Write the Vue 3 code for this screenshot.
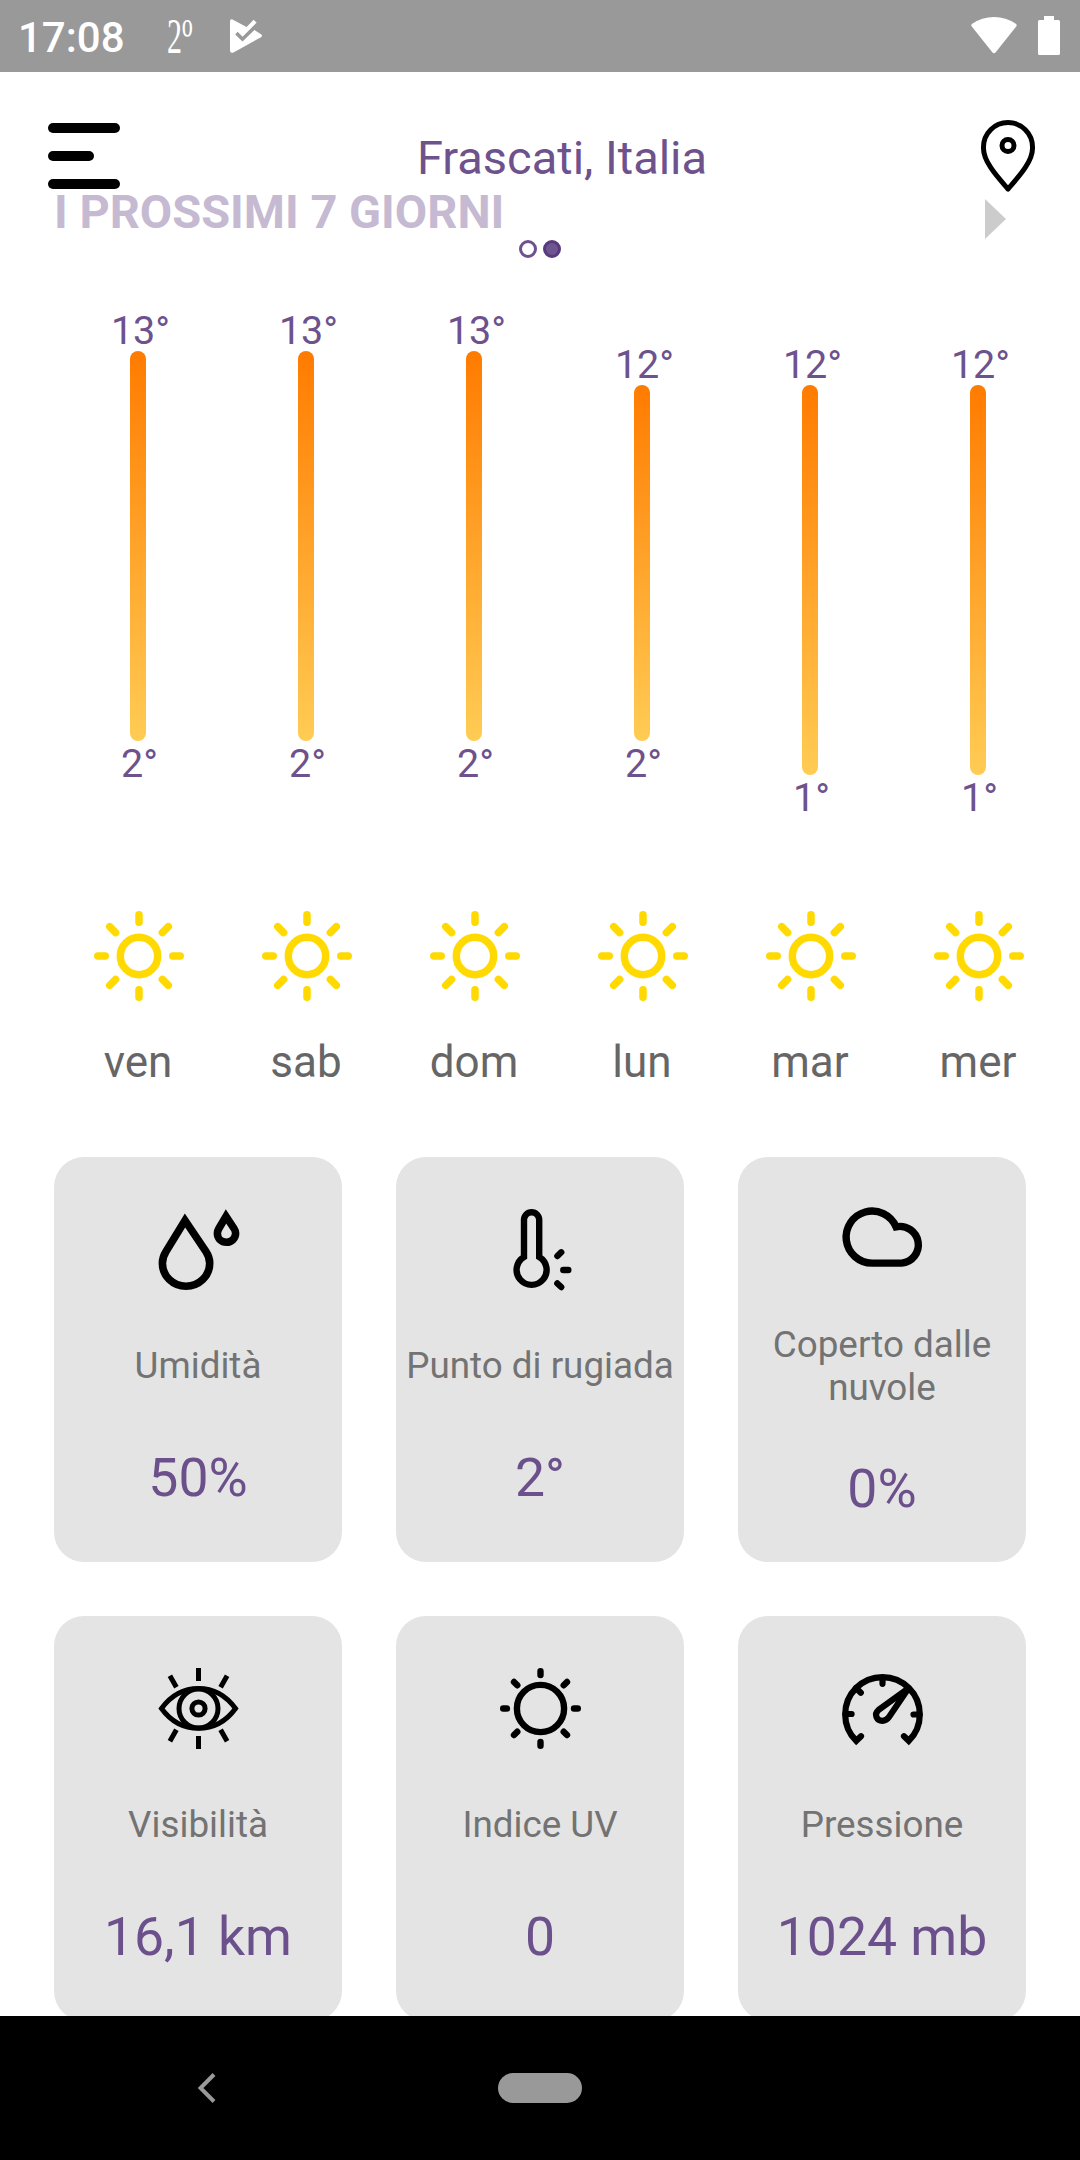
<template>
  <div class="screen">
    <div class="status-bar">
      <span class="clock">17:08</span>
      <span class="temp-badge"><span class="temp-badge-text">2<span class="ordinal">º</span></span></span>
      <svg class="store-icon" viewBox="0 0 32 34">
        <path d="M2 .3 16.6 8 23.6 .8 26.6 3.6 12.6 17.7 7.6 12.7 5.2 15.4 12.5 22.4 24.4 10.9 31 15.2Q33 16.6 31 18.2L3 33.7Q0 34.4 0 31.6V2.2Q0 0 2 .3Z" fill="#fff" />
      </svg>
      <svg class="wifi-icon" viewBox="0 0 46 37">
        <path d="M.8 9.6Q-.4 8 1.2 6.8Q11 0 23 0T44.800 6.800Q46.400 8 45.200 9.600L24.500 35.500Q23 37 21.500 35.500Z" fill="#fff" />
      </svg>
      <svg class="battery-icon" viewBox="0 0 22 39">
        <path d="M6 0H16V4H20.500Q22 4 22 5.500V37.500Q22 39 20.500 39H1.500Q0 39 0 37.500V5.500Q0 4 1.500 4H6Z" fill="#fff" />
      </svg>
    </div>

    <div class="content">
      <header class="header">
        <div class="menu">
          <span class="menu-line"></span>
          <span class="menu-line short"></span>
          <span class="menu-line"></span>
        </div>
        <h1 class="city">Frascati, Italia</h1>
        <svg class="pin" viewBox="0 0 54 72">
          <path d="M27 69C18 58.500 2.500 42.500 2.500 28.500V27A24.500 24.500 0 0 1 51.500 27V28.500C51.500 42.500 36 58.500 27 69Z" />
          <circle cx="27" cy="25.600" r="6" />
        </svg>
      </header>

      <div class="section-row">
        <h2 class="section-title">I PROSSIMI 7 GIORNI</h2>
        <span class="next-arrow"></span>
      </div>
      <div class="pager">
        <span class="dot"></span>
        <span class="dot active"></span>
      </div>

      <div class="forecast">
        <div v-for="day in days" :key="day.name" class="day">
          <div class="plot" :style="{ paddingTop: (maxTemp - day.high) * degree + 'px' }">
            <span class="temp">{{ day.high }}°</span>
            <span class="bar" :style="{ height: (day.high - day.low) * degree + 16 + 'px' }"></span>
            <span class="temp low">{{ day.low }}°</span>
          </div>
          <svg class="sun" viewBox="-45 -45 90 90">
            <circle r="18.700" />
            <path v-for="a in 4" :key="a" :transform="`rotate(${a * 90})`" d="M0-41.200V-33.800M23.400-23.400 29.300-29.300" />
          </svg>
          <span class="day-name">{{ day.name }}</span>
        </div>
      </div>

      <div class="cards">
        <div v-for="card in cards" :key="card.label" class="card">
          <svg class="card-icon" viewBox="0 0 81 81" :stroke-width="card.stroke" :class="{ round: card.round }">
            <path v-for="d in card.paths" :key="d" :d="d" />
          </svg>
          <span class="label">{{ card.label }}</span>
          <span class="value">{{ card.value }}</span>
        </div>
      </div>
    </div>

    <div class="nav-bar">
      <svg class="back" viewBox="0 0 18 30">
        <path d="M16 1.500 2.500 15 16 28.500" />
      </svg>
      <span class="home"></span>
    </div>
  </div>
</template>

<script setup>
const maxTemp = 13
// height of one degree in the chart, in px
const degree = 34

const days = [
  { name: 'ven', high: 13, low: 2 },
  { name: 'sab', high: 13, low: 2 },
  { name: 'dom', high: 13, low: 2 },
  { name: 'lun', high: 12, low: 2 },
  { name: 'mar', high: 12, low: 1 },
  { name: 'mer', high: 12, low: 1 },
]

const cards = [
  {
    label: 'Umidità',
    value: '50%',
    stroke: 7.6,
    paths: [
      'M27 11.500 8 42.500C5.800 46 4.400 50 4.400 54.200C4.400 67 15 77.200 28 77.200S51.700 67 51.700 54.200C51.700 50 50.500 46.500 48 42.700Z',
      'M68 7.500 61 19.300C60 21 59.400 22.500 59.400 24.200C59.400 29.500 63.500 33.200 68.500 33.200S77.600 29.400 77.600 24.200C77.600 22.500 77 21 76 19.500Z',
    ],
  },
  {
    label: 'Punto di rugiada',
    value: '2°',
    stroke: 6.4,
    round: true,
    paths: [
      'M24 47.900V10.800A7.600 7.600 0 0 1 39.200 10.800V47.900A15 15 0 1 1 24 47.900Z',
      'M57.400 47 61.200 43.300M63.300 61H68.300M57.400 74.500 61.200 78',
    ],
  },
  {
    label: 'Coperto dalle nuvole',
    value: '0%',
    stroke: 7.4,
    paths: ['M30 65.100A26 26 0 1 1 54 28.800A18.400 18.400 0 1 1 59.600 65.100Z'],
  },
  {
    label: 'Visibilità',
    value: '16,1 km',
    stroke: 5,
    paths: [
      'M3.500 40.500C13 27.500 26 20.500 40.500 20.500S68 27.500 77.500 40.500C68 53.500 55 60.300 40.500 60.300S13 53.500 3.500 40.500Z',
      'M21 40.500A19.500 19.500 0 1 1 60 40.500A19.500 19.500 0 1 1 21 40.500Z',
      'M33.900 40.500A6.600 6.600 0 1 1 47.100 40.500A6.600 6.600 0 1 1 33.900 40.500Z',
      'M40.500 0V13M40.500 68V81M11.900 7.700 18.400 19.300M69.100 7.700 62.600 19.300M11.900 73.300 18.400 61.700M69.100 73.300 62.600 61.700',
    ],
  },
  {
    label: 'Indice UV',
    value: '0',
    stroke: 6.4,
    round: true,
    paths: [
      'M16.900 40.500A23.600 23.600 0 1 1 64.100 40.500A23.600 23.600 0 1 1 16.900 40.500Z',
      'M40.500 3.200V7M40.500 74V77.800M3.200 40.500H7M74 40.500H77.800M14 14 17.300 17.300M67 14 63.700 17.300M14 67 17.300 63.700M67 67 63.700 63.700',
    ],
  },
  {
    label: 'Pressione',
    value: '1024 mb',
    stroke: 6.2,
    round: true,
    paths: [
      'M19 68.200 14.200 72.800A37.300 37.300 0 1 1 66.800 72.800L62 68.200',
      'M40.500 10V15.800M3.500 46H9.600M77.500 46.500H71.500M14 20 18.800 24.800',
      'M66.500 20.300 36.500 42C31.500 46.500 34.800 52.800 40.300 52.800C43.500 52.800 45.500 51.200 47 49Z',
    ],
  },
]
</script>

<style>
body {
  background: #fff;
}
</style>

<style scoped>
.screen {
  display: flex;
  flex-direction: column;
  width: 1080px;
  height: 2160px;
  overflow: hidden;
  background: #fff;
  font-family: Roboto, "Liberation Sans", sans-serif;
}

.status-bar {
  display: flex;
  flex: none;
  align-items: flex-start;
  box-sizing: border-box;
  height: 72px;
  padding: 0 20px 0 18px;
  background: #999;
  color: #fff;
}
.clock {
  width: 149px;
  padding-top: 13px;
  font-size: 42px;
  font-weight: 500;
  line-height: 50px;
}
.temp-badge {
  width: 63px;
  padding-top: 8px;
}
.temp-badge-text {
  display: inline-block;
  font-family: "Liberation Serif", serif;
  font-size: 50px;
  line-height: 56px;
  transform: scaleX(0.6);
  transform-origin: left;
}
.ordinal {
  font-size: 57px;
  line-height: 0;
  vertical-align: -5px;
}
.store-icon {
  width: 32px;
  height: 34px;
  margin-top: 19px;
}
.wifi-icon {
  width: 46px;
  height: 37px;
  margin: 17px 21px 0 auto;
}
.battery-icon {
  width: 22px;
  height: 39px;
  margin-top: 16px;
}

.content {
  flex: 1;
  min-height: 0;
  overflow: hidden;
}

.header {
  display: flex;
  align-items: center;
  justify-content: space-between;
  height: 72px;
  padding: 48px 45px 0 48px;
}
.menu {
  display: flex;
  flex-direction: column;
  gap: 18px;
  width: 72px;
}
.menu-line {
  height: 10px;
  border-radius: 5px;
  background: #000;
}
.menu-line.short {
  width: 46px;
}
.city {
  margin: 4px 0 0 23px;
  color: #6d528d;
  font-size: 47px;
  font-weight: 400;
  line-height: 56px;
}
.pin {
  width: 54px;
  height: 72px;
  fill: none;
  stroke: #000;
  stroke-width: 5;
  stroke-linejoin: round;
}

.section-row {
  display: flex;
  align-items: flex-end;
  justify-content: space-between;
  height: 54px;
  margin-top: -7px;
  padding: 0 74px 0 54px;
}
.section-title {
  margin: 0;
  color: #c5bad2;
  font-size: 47px;
  font-weight: 700;
  line-height: 54px;
}
.next-arrow {
  border-top: 20.5px solid transparent;
  border-bottom: 20.5px solid transparent;
  border-left: 21px solid #ccc;
}

.pager {
  display: flex;
  justify-content: center;
  gap: 6px;
  padding-top: 1px;
}
.dot {
  box-sizing: border-box;
  width: 18px;
  height: 18px;
  border: 3px solid #6d528d;
  border-radius: 50%;
}
.dot.active {
  border-color: #59397e;
  background: #6f558f;
}

.forecast {
  display: flex;
  margin-top: 53px;
  padding-left: 54px;
}
.day {
  display: flex;
  flex-direction: column;
  align-items: center;
  width: 168px;
}
.plot {
  display: flex;
  flex-direction: column;
  align-items: center;
  box-sizing: border-box;
  height: 600px;
}
.temp {
  padding-left: 5px;
  color: #6d528d;
  font-size: 39.5px;
  line-height: 40px;
}
.temp.low {
  margin-top: 3px;
  padding-left: 3px;
}
.bar {
  width: 16px;
  border-radius: 8px;
  background: linear-gradient(#ff7b00, #ffcc54);
}
.sun {
  width: 90px;
  height: 90px;
  margin-left: 1px;
  fill: none;
  stroke: #ffd900;
  stroke-width: 7.5;
  stroke-linecap: round;
}
.day-name {
  margin-top: 35px;
  color: #666;
  font-size: 44px;
  line-height: 52px;
}

.cards {
  display: grid;
  grid-template-columns: repeat(3, 288px);
  grid-auto-rows: 405px;
  gap: 54px;
  margin-top: 69px;
  padding: 0 54px;
}
.card {
  display: flex;
  flex-direction: column;
  align-items: center;
  justify-content: space-evenly;
  border-radius: 30px;
  background: #e4e4e4;
  text-align: center;
}
.card-icon {
  width: 81px;
  height: 81px;
  margin: 1px 0 -1px;
  overflow: visible;
  fill: none;
  stroke: #000;
}
.card-icon.round {
  stroke-linecap: round;
}
.label {
  padding: 4px 8px 1px;
  color: #737373;
  font-size: 36.8px;
  line-height: 43px;
}
.value {
  padding: 7px 0 2px;
  color: #6b508b;
  font-size: 53.5px;
  line-height: 63px;
}

.nav-bar {
  display: flex;
  flex: none;
  align-items: center;
  height: 144px;
  padding-left: 198px;
  background: #000;
}
.back {
  width: 18px;
  height: 30px;
  fill: none;
  stroke: #999;
  stroke-width: 4;
}
.home {
  width: 84px;
  height: 30px;
  margin-left: 282px;
  border-radius: 15px;
  background: #999;
}
</style>
